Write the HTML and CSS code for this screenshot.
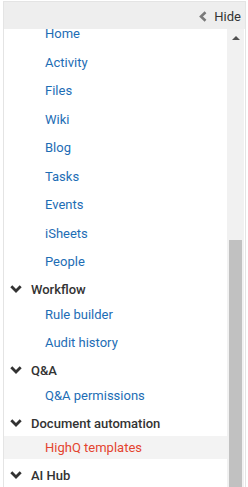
FILE: index.html
```html
<!DOCTYPE html>
<html lang="en">
<head>
    <meta charset="UTF-8">
    <meta name="viewport" content="width=device-width, initial-scale=1.0">
    <title>Site navigation</title>
    <link rel="stylesheet" href="styles.css">
</head>
<body>
    <div class="panel">
        <div class="panel-head">
            <button class="hide-btn">
                <svg class="hide-icon" width="8" height="11" viewBox="0 0 8 11"><polyline points="6.5,1.2 2,5.5 6.5,9.8" fill="none" stroke="#7a7a7a" stroke-width="2.6"/></svg>
                Hide
            </button>
        </div>

        <div class="panel-body">
            <div class="nav">
                <div class="nav-scroll">
                    <ul class="group-items">
                        <li><a href="#">Home</a></li>
                        <li><a href="#">Activity</a></li>
                        <li><a href="#">Files</a></li>
                        <li><a href="#">Wiki</a></li>
                        <li><a href="#">Blog</a></li>
                        <li><a href="#">Tasks</a></li>
                        <li><a href="#">Events</a></li>
                        <li><a href="#">iSheets</a></li>
                        <li><a href="#">People</a></li>
                    </ul>

                    <div class="group-head">
                        <svg class="chev" width="12" height="8" viewBox="0 0 12 8"><polyline points="1.3,1.3 6,6 10.7,1.3" fill="none" stroke="#333" stroke-width="2.8"/></svg>
                        Workflow
                    </div>
                    <ul class="group-items">
                        <li><a href="#">Rule builder</a></li>
                        <li><a href="#">Audit history</a></li>
                    </ul>

                    <div class="group-head">
                        <svg class="chev" width="12" height="8" viewBox="0 0 12 8"><polyline points="1.3,1.3 6,6 10.7,1.3" fill="none" stroke="#333" stroke-width="2.8"/></svg>
                        Q&amp;A
                    </div>
                    <ul class="group-items">
                        <li><a href="#">Q&amp;A permissions</a></li>
                    </ul>

                    <div class="group-head">
                        <svg class="chev" width="12" height="8" viewBox="0 0 12 8"><polyline points="1.3,1.3 6,6 10.7,1.3" fill="none" stroke="#333" stroke-width="2.8"/></svg>
                        Document automation
                    </div>
                    <ul class="group-items">
                        <li><a href="#" class="active">HighQ templates</a></li>
                    </ul>

                    <div class="group-head">
                        <svg class="chev" width="12" height="8" viewBox="0 0 12 8"><polyline points="1.3,1.3 6,6 10.7,1.3" fill="none" stroke="#333" stroke-width="2.8"/></svg>
                        AI Hub
                    </div>
                </div>
            </div>

            <div class="scrollbar">
                <div class="scroll-up"><span class="arrow-up"></span></div>
                <div class="scroll-thumb"></div>
            </div>
        </div>
    </div>
</body>
</html>
```

FILE: styles.css
```css
html, body {
    margin: 0;
    padding: 0;
    height: 100%;
    overflow: hidden;
    background: #ffffff;
}

body {
    font-family: Roboto, "Liberation Sans", Arial, sans-serif;
    font-size: 13px;
    color: #333333;
}

.panel {
    margin: 1px 2px 0 3px;
    border: 1px solid #e4e4e4;
    border-bottom: none;
    height: 486px;
    display: flex;
    flex-direction: column;
}

.panel-head {
    height: 27px;
    flex-shrink: 0;
    background-color: #eeeeee;
    display: flex;
    justify-content: flex-end;
    align-items: center;
    padding-right: 4px;
    position: relative;
    z-index: 1;
}

.hide-btn {
    display: flex;
    align-items: center;
    gap: 7px;
    background: none;
    border: none;
    padding: 0;
    margin-top: 1px;
    font-family: inherit;
    font-size: 13px;
    color: #333333;
    cursor: pointer;
}

.panel-body {
    flex: 1;
    display: flex;
    min-height: 0;
    padding-right: 1px;
}

.nav {
    flex: 1;
    overflow: hidden;
}

/* list is scrolled down a little, Home sits under the header */
.nav-scroll {
    margin-top: -9px;
}

ul {
    list-style: none;
    margin: 0;
    padding: 0;
}

.group-items {
    padding-bottom: 2px;
}

.group-items li {
    padding: 2px 0 3.5px;
}

.group-items a {
    display: block;
    height: 23px;
    line-height: 23px;
    padding-left: 41px;
    color: #1d6db5;
    text-decoration: none;
}

.group-items a.active {
    background-color: #f3f3f3;
    color: #e4442f;
}

.group-head {
    height: 22px;
    display: flex;
    align-items: center;
    gap: 9px;
    padding-left: 6px;
    font-weight: 500;
    color: #333333;
}

.chev {
    display: block;
    margin-top: -1px;
}

.scrollbar {
    width: 17px;
    background-color: #f1f1f1;
    display: flex;
    flex-direction: column;
    align-items: center;
    overflow: hidden;
}

.scroll-up {
    height: 17px;
    width: 17px;
    flex-shrink: 0;
    display: flex;
    align-items: center;
    justify-content: center;
}

.arrow-up {
    width: 0;
    height: 0;
    border-left: 4px solid transparent;
    border-right: 4px solid transparent;
    border-bottom: 4px solid #505050;
}

.scroll-thumb {
    width: 13px;
    height: 260px;
    margin-top: 194px;
    background-color: #c1c1c1;
    flex-shrink: 0;
}
```
